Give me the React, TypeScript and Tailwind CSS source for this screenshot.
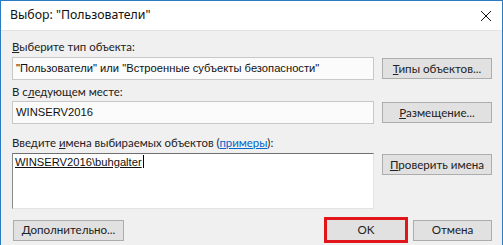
import React from 'react';

const title = { fontFamily: '"Noto Sans", "Open Sans", sans-serif' };
const ui = { fontFamily: 'Lato, "Noto Sans", sans-serif' };
const ms = { fontFamily: '"Liberation Sans", Arial, sans-serif' };

function Btn({ children, className = '' }: { children: React.ReactNode; className?: string }) {
  return (
    <div
      className={`flex h-[21px] items-center justify-center border border-[#adadad] bg-[#e1e1e1] text-[11.6px] text-[#222] ${className}`}
      style={ui}
    >
      {children}
    </div>
  );
}

function Label({ children }: { children: React.ReactNode }) {
  return (
    <div className="h-[16px] text-[11.4px] leading-[16px] text-[#222]" style={ui}>
      {children}
    </div>
  );
}

export default function App() {
  return (
    <div className="flex h-[245px] w-[503px] flex-col overflow-hidden border-x border-t border-[#2b7bc4] bg-[#f0f0f0]">
      {/* Title bar */}
      <div className="flex h-[30px] shrink-0 items-center justify-between border-b border-[#e3e3e3] bg-white pl-[9px] pr-[8px]">
        <span className="text-[12.3px] text-[#111]" style={title}>
          Выбор: "Пользователи"
        </span>
        <svg width="12" height="12" viewBox="0 0 12 12" className="mr-[2px]">
          <path d="M1 1 L11 11 M11 1 L1 11" stroke="#111" strokeWidth="1" />
        </svg>
      </div>

      <div className="flex flex-1 flex-col pl-[11px] pr-[10px] pt-[8px]">
        <Label>
          <u>В</u>ыберите тип объекта:
        </Label>
        <div className="mt-[2px] flex items-start gap-[8px]">
          <div className="flex h-[23px] flex-1 items-center border border-[#c8c8c8] bg-[#fbfbfb] pl-[3px] text-[11.2px] text-[#111]" style={ms}>
            "Пользователи" или "Встроенные субъекты безопасности"
          </div>
          <Btn className="mt-[1px] w-[110px]">
            <span>
              <u>Т</u>ипы объектов...
            </span>
          </Btn>
        </div>

        <div className="mt-[4px]">
          <Label>
            В с<u>л</u>едующем месте:
          </Label>
        </div>
        <div className="mt-[1px] flex items-start gap-[8px]">
          <div className="flex h-[23px] flex-1 items-center border border-[#c8c8c8] bg-[#fbfbfb] pl-[3px] text-[11.2px] text-[#111]" style={ms}>
            WINSERV2016
          </div>
          <Btn className="mt-[1px] w-[110px]">
            <span>
              <u>Р</u>азмещение...
            </span>
          </Btn>
        </div>

        <div className="mt-[11px]">
          <Label>
            Введите <u>и</u>мена выбираемых объектов (
            <span className="text-[#0066cc] underline">примеры</span>):
          </Label>
        </div>
        <div className="mt-[2px] flex items-start gap-[8px]">
          <div
            className="h-[56px] flex-1 border border-b-[#e3e3e3] border-l-[#8a8a8a] border-r-[#e3e3e3] border-t-[#6f6f6f] bg-white pl-[2px] pt-[1px] text-[11.2px] leading-[14px] text-[#111]"
            style={ms}
          >
            <span className="underline">WINSERV2016\buhgalter</span>
            <span className="ml-[1px] inline-block h-[13px] w-[1px] bg-black align-[-2px]" />
          </div>
          <Btn className="mt-[1px] w-[110px]">
            <span>
              <u>П</u>роверить имена
            </span>
          </Btn>
        </div>

        <div className="mt-[8px] flex items-center">
          <Btn className="ml-[1px] w-[111px]">
            <span>
              <u>Д</u>ополнительно...
            </span>
          </Btn>
          <div className="ml-auto border-[3px] border-[#e0161b] bg-[#e1e1e1]">
            <div className="flex h-[20px] w-[78px] items-center justify-center text-[11.6px] text-[#222]" style={ui}>
              OK
            </div>
          </div>
          <Btn className="ml-[5px] w-[79px]">Отмена</Btn>
        </div>
      </div>
    </div>
  );
}
